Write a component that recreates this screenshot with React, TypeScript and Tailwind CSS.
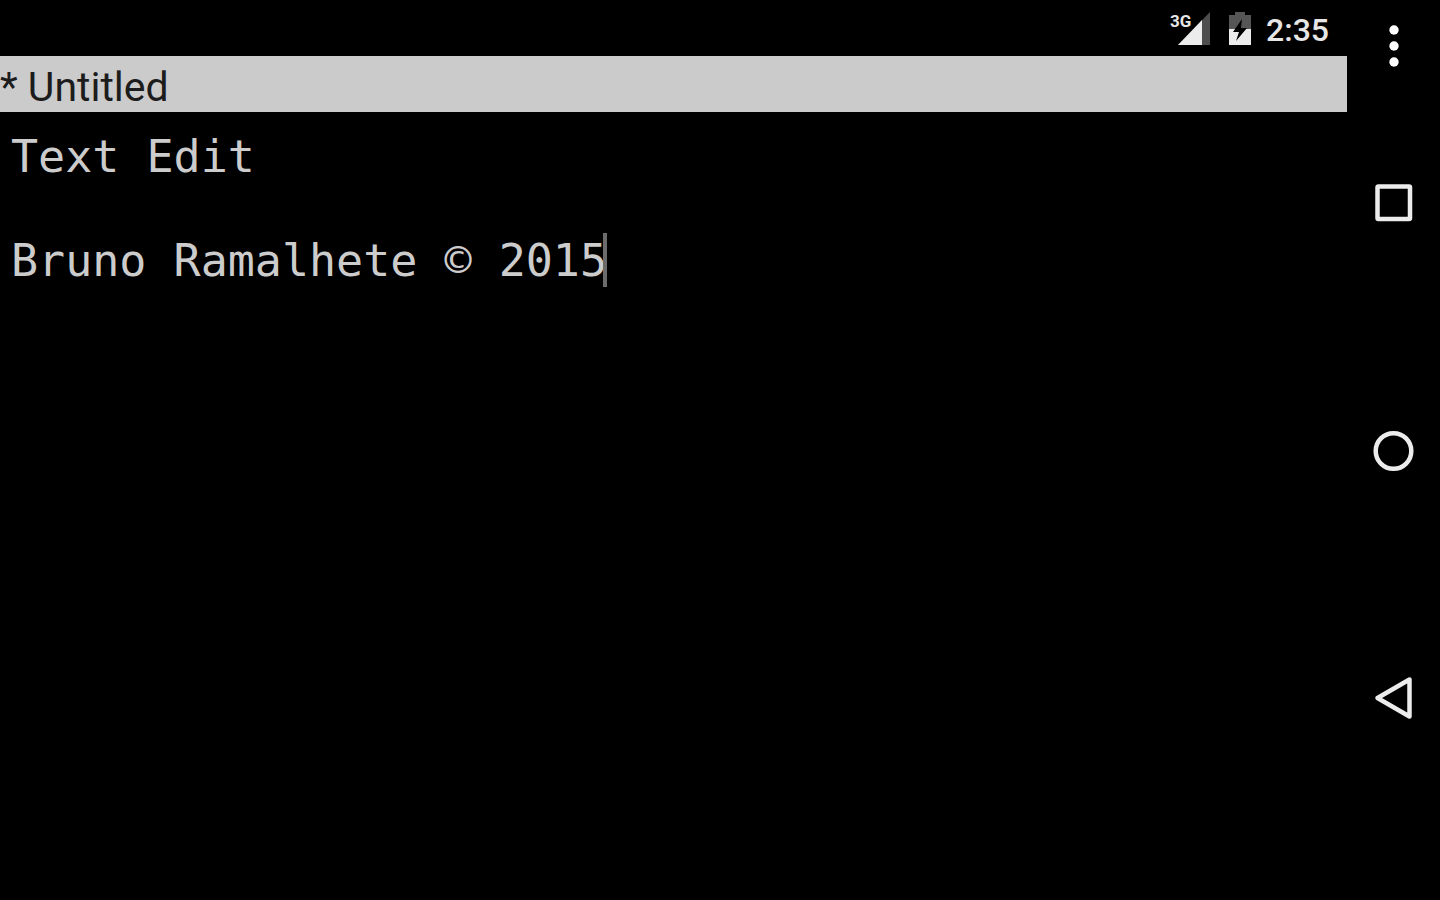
import React, { useState } from 'react';

const INITIAL_TEXT = 'Text Edit\n\nBruno Ramalhete © 2015';

const SignalIcon: React.FC = () => (
    <svg width="32" height="33" viewBox="0 0 32 33" aria-hidden="true">
        <path d="M32 0v33H0z" fill="#4d4d4d" />
        <path d="M24 8v25H0z" fill="#ececec" />
    </svg>
);

const BatteryIcon: React.FC = () => (
    <svg width="22" height="33" viewBox="0 0 22 33" aria-hidden="true">
        <path d="M6 0h10v3h6v14H0V3h6z" fill="#565656" />
        <path d="M0 17h22v16H0z" fill="#ececec" />
        <path d="M13 7L4 20h6l-3 9 11-13h-6z" fill="#000" />
    </svg>
);

const StatusBar: React.FC = () => (
    <header className="flex h-14 items-start justify-end pt-3 pr-[18px] text-[#e6e6e6]">
        <div className="relative mr-[19px]">
            <SignalIcon />
            <span className="absolute top-0 -left-2 text-[17px] leading-[18px] font-bold">3G</span>
        </div>
        <BatteryIcon />
        <time className="ml-[15px] text-[32px] leading-9 font-medium">2:35</time>
    </header>
);

const Editor: React.FC = () => {
    const [text, setText] = useState(INITIAL_TEXT);
    const lines = text.split('\n');
    const lastLine = lines[lines.length - 1];

    return (
        <main className="relative flex flex-1 font-['DejaVu_Sans_Mono',monospace] text-[45px] leading-[52px]">
            <textarea
                aria-label="Document text"
                value={text}
                onChange={(e) => setText(e.target.value)}
                spellCheck={false}
                className="flex-1 resize-none bg-transparent px-[11px] py-[19px] text-[#cccccc] caret-transparent outline-none"
            />
            <span
                className="absolute h-[54px] w-1 bg-[#6b6b6b]"
                style={{
                    left: `calc(7px + ${lastLine.length}ch)`,
                    top: 17 + (lines.length - 1) * 52
                }}
            />
        </main>
    );
};

const NavigationBar: React.FC = () => (
    <nav className="flex w-[93px] flex-col pb-[78px]">
        <button type="button" aria-label="More options" className="flex h-20 items-center justify-center pt-3">
            <svg width="10" height="42" viewBox="0 0 10 42" fill="#fff">
                <circle cx="5" cy="5" r="4.7" />
                <circle cx="5" cy="21" r="4.7" />
                <circle cx="5" cy="37" r="4.7" />
            </svg>
        </button>
        <button type="button" aria-label="Recent apps" className="flex flex-1 items-center justify-center">
            <svg width="44" height="44" viewBox="0 0 44 44" fill="none" stroke="#ececec" strokeWidth="4.5">
                <rect x="5.5" y="4.5" width="32.5" height="32.5" rx="1" />
            </svg>
        </button>
        <button type="button" aria-label="Home" className="flex flex-1 items-center justify-center">
            <svg width="44" height="44" viewBox="0 0 44 44" fill="none" stroke="#ececec" strokeWidth="4.5">
                <circle cx="21.5" cy="22" r="17.8" />
            </svg>
        </button>
        <button type="button" aria-label="Back" className="flex flex-1 items-center justify-center">
            <svg
                width="44"
                height="44"
                viewBox="0 0 44 44"
                fill="none"
                stroke="#ececec"
                strokeWidth="4.5"
                strokeLinejoin="round"
            >
                <path d="M37.5 3.5v37L5.5 22z" />
            </svg>
        </button>
    </nav>
);

export default function App() {
    return (
        <div className="flex min-h-screen bg-black font-['Roboto',sans-serif]">
            <div className="flex flex-1 flex-col">
                <StatusBar />
                <h1 className="h-14 bg-[#cbcbcb] text-[41px] leading-[62px] text-[#1c1c1c]">* Untitled</h1>
                <Editor />
            </div>
            <NavigationBar />
        </div>
    );
}
